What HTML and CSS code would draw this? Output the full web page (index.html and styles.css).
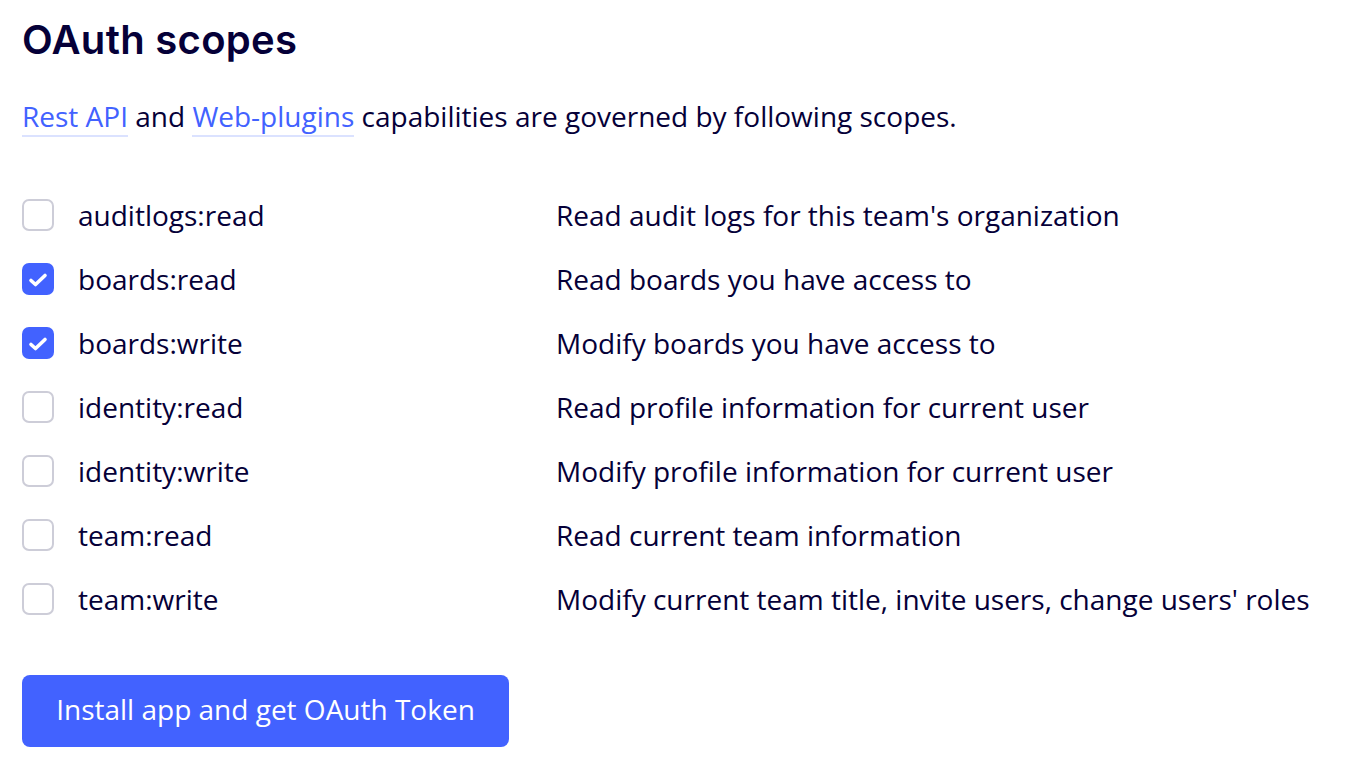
FILE: index.html
```html
<!DOCTYPE html>
<html>
<head>
<meta charset="utf-8">
<link rel="stylesheet" href="styles.css">
</head>
<body>
<main class="page">
  <h1 class="title">OAuth scopes</h1>
  <p class="intro"><a class="link" href="#">Rest API</a> and <a class="link" href="#">Web-plugins</a> capabilities are governed by following scopes.</p>
  <ul class="scopes">
    <li class="scope"><span class="box"></span><span class="name">auditlogs:read</span><span class="desc">Read audit logs for this team's organization</span></li>
    <li class="scope"><span class="box checked"><svg viewBox="0 0 32 32" width="32" height="32"><path d="M9 17.5l4.5 4 9.5-9" fill="none" stroke="#fff" stroke-width="3.6" stroke-linecap="round" stroke-linejoin="round"/></svg></span><span class="name">boards:read</span><span class="desc">Read boards you have access to</span></li>
    <li class="scope"><span class="box checked"><svg viewBox="0 0 32 32" width="32" height="32"><path d="M9 17.5l4.5 4 9.5-9" fill="none" stroke="#fff" stroke-width="3.6" stroke-linecap="round" stroke-linejoin="round"/></svg></span><span class="name">boards:write</span><span class="desc">Modify boards you have access to</span></li>
    <li class="scope"><span class="box"></span><span class="name">identity:read</span><span class="desc">Read profile information for current user</span></li>
    <li class="scope"><span class="box"></span><span class="name">identity:write</span><span class="desc">Modify profile information for current user</span></li>
    <li class="scope"><span class="box"></span><span class="name">team:read</span><span class="desc">Read current team information</span></li>
    <li class="scope"><span class="box"></span><span class="name">team:write</span><span class="desc">Modify current team title, invite users, change users' roles</span></li>
  </ul>
  <button class="install">Install app and get OAuth Token</button>
</main>
</body>
</html>
```
FILE: styles.css
```css
* { box-sizing: border-box; }
html, body { margin: 0; padding: 0; background: #ffffff; }
body {
  font-family: "Open Sans", "Noto Sans", sans-serif;
  color: #050038;
}
.page {
  padding: 14px 22px 0 22px;
}
.title {
  margin: 0;
  font-family: Inter, "Noto Sans", sans-serif;
  font-weight: 600;
  font-size: 40px;
  line-height: 52px;
  letter-spacing: 0.3px;
  color: #050038;
}
.intro {
  margin: 32px 0 0 0;
  font-size: 28px;
  line-height: 36px;
}
.link {
  color: #4262ff;
  text-decoration: none;
  border-bottom: 2px solid #dbe2ff;
  padding-bottom: 0;
}
.scopes {
  list-style: none;
  margin: 49px 0 0 0;
  padding: 0;
}
.scope {
  display: grid;
  grid-template-columns: 32px 454px 1fr;
  column-gap: 24px;
  align-items: center;
  height: 64px;
  font-size: 28px;
}
.box {
  width: 32px;
  height: 32px;
  border: 2px solid #cdcdd8;
  border-radius: 7px;
  background: #fff;
  display: block;
}
.box.checked {
  border: none;
  background: #4262ff;
}
.box svg { display: block; }
.install {
  margin-top: 44px;
  display: block;
  width: 487px;
  height: 72px;
  padding: 0 0 4px 0;
  border: none;
  border-radius: 8px;
  background: #4262ff;
  color: #ffffff;
  font-family: "Open Sans", "Noto Sans", sans-serif;
  font-size: 28px;
  cursor: pointer;
}
```
